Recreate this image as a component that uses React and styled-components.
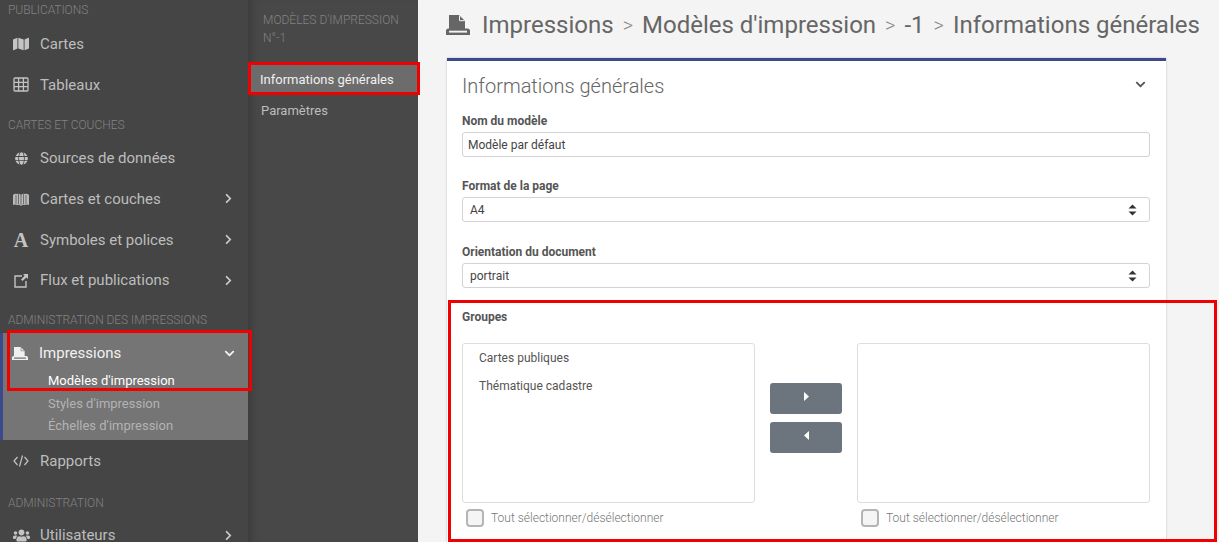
import React from 'react';
import styled, { createGlobalStyle } from 'styled-components';
import { FaMap, FaGlobe, FaUsers, FaChevronRight, FaChevronDown } from 'react-icons/fa';

const GlobalStyle = createGlobalStyle`
    html, body {
        margin: 0;
        height: 100%;
        overflow: hidden;
        background: #f4f4f4;
        font-family: Roboto, "Liberation Sans", sans-serif;
    }
`;

const Page = styled.div`
    display: flex;
    width: 1219px;
    height: 542px;
    overflow: hidden;
`;

const Sidebar = styled.nav`
    flex: none;
    width: 248px;
    height: 542px;
    background: #454545;
    position: relative;
    z-index: 2;
`;

const SectionLabel = styled.div`
    height: 14px;
    line-height: 14px;
    padding: ${props => props.$pad || '0'};
    padding-left: 8px;
    font-size: 12px;
    font-weight: 300;
    letter-spacing: -0.05px;
    color: #828282;
    white-space: nowrap;
`;

const MenuItem = styled.div`
    display: flex;
    align-items: center;
    height: 40.7px;
    padding-left: 12px;
    padding-right: 14px;
    font-size: 15px;
    color: #bdbdbd;
`;

const IconSlot = styled.span`
    display: flex;
    justify-content: center;
    align-items: center;
    width: 18px;
    margin-right: 10px;
    color: #c4c4c4;
    font-size: ${props => props.$size || 16}px;
`;

const SerifA = styled.span`
    font-family: "Liberation Serif", serif;
    font-weight: 700;
    font-size: 20px;
    line-height: 1;
`;

const ItemLabel = styled.span`
    flex: 1;
    color: ${props => (props.$active ? '#f2f2f2' : '#bdbdbd')};
`;

const Caret = styled.span`
    display: flex;
    font-size: 11px;
    color: ${props => (props.$active ? '#f2f2f2' : '#c9c9c9')};
`;

const ActiveGroup = styled.div`
    position: relative;
    margin-top: 6px;
    background: #757575;
    border-left: 3px solid #3b4a8c;
    height: 107px;
`;

const ActiveHead = styled.div`
    display: flex;
    align-items: center;
    box-sizing: border-box;
    height: 37px;
    padding-top: 3px;
    padding-left: 8px;
    padding-right: 13px;
    font-size: 15px;
`;

const SubItem = styled.div`
    height: 22.5px;
    line-height: 22.5px;
    padding-left: 45px;
    font-size: 13px;
    color: ${props => (props.$active ? '#ffffff' : '#b3b3b3')};
`;

const RedFrame = styled.div`
    position: absolute;
    border: 3px solid #f00000;
    pointer-events: none;
    box-sizing: border-box;
`;

const SecondNav = styled.nav`
    flex: none;
    width: 170px;
    height: 542px;
    background: #484848;
    box-shadow: inset 8px 0 8px -6px rgba(0, 0, 0, 0.22);
    box-sizing: border-box;
    padding-top: 11px;
`;

const SecondTitle = styled.div`
    padding-left: 15px;
    font-size: 12px;
    font-weight: 300;
    line-height: 18px;
    color: #828282;
    height: 53px;
`;

const SecondItem = styled.div`
    position: relative;
    height: 31px;
    line-height: 31px;
    padding-left: ${props => (props.$active ? '12px' : '13px')};
    font-size: 13px;
    background: ${props => (props.$active ? '#6c6c6c' : 'transparent')};
    color: ${props => (props.$active ? '#f0f0f0' : '#bdbdbd')};
`;

const Main = styled.main`
    flex: 1;
    min-width: 0;
    padding: 0 0 0 29px;
    overflow: hidden;
`;

const Breadcrumb = styled.div`
    display: flex;
    align-items: center;
    height: 58px;
    padding-bottom: 8px;
    box-sizing: border-box;
    color: #666666;
    font-size: 24px;
    white-space: nowrap;
`;

const Sep = styled.span`
    margin: 0 9px;
    font-size: 20px;
    font-weight: 300;
    color: #888888;
`;

const PrintWrap = styled.span`
    display: flex;
    width: 24px;
    margin-left: -1px;
    margin-right: 12px;
`;

const Card = styled.section`
    position: relative;
    box-sizing: border-box;
    width: 719px;
    height: 520px;
    padding: 13px 16px 0 15px;
    background: #ffffff;
    border-top: 3px solid #3b4a8c;
    box-shadow: 0 0 2px rgba(0, 0, 0, 0.22);
`;

const CardHeader = styled.div`
    display: flex;
    align-items: center;
    justify-content: space-between;
    height: 24px;
    margin-bottom: 16px;
    font-size: 20px;
    font-weight: 300;
    color: #666666;
`;

const Collapse = styled.span`
    display: flex;
    margin-right: 4px;
    margin-top: -4px;
    font-size: 11px;
    color: #555555;
`;

const Field = styled.div`
    margin-bottom: ${props => props.$gap || 22}px;
`;

const Label = styled.div`
    height: 14px;
    line-height: 14px;
    margin-bottom: 4px;
    font-size: 12px;
    font-weight: 700;
    color: #555555;
`;

const Input = styled.div`
    display: flex;
    align-items: center;
    justify-content: space-between;
    box-sizing: border-box;
    height: 25px;
    padding: ${props => (props.$select ? '0 12px 0 7px' : '0 5px')};
    border: 1px solid #d2d2d8;
    border-radius: 3px;
    font-size: 12px;
    color: #444444;
`;

const GroupSection = styled.div`
    position: relative;
    margin-top: 22px;
`;

const DualList = styled.div`
    display: grid;
    grid-template-columns: 293px 102px 293px;
    margin-top: 19px;
`;

const ListPane = styled.div`
    display: flex;
    flex-direction: column;
`;

const ListBox = styled.div`
    box-sizing: border-box;
    height: 160px;
    padding: 0 16px;
    border: 1px solid #dddddd;
    border-radius: 3px;
    font-size: 12px;
    color: #555555;
`;

const ListOption = styled.div`
    height: 28px;
    line-height: 28px;
`;

const Arrows = styled.div`
    display: flex;
    flex-direction: column;
    align-items: center;
    gap: 8px;
    padding-top: 40px;
`;

const ArrowButton = styled.div`
    display: flex;
    justify-content: center;
    padding-top: 9px;
    box-sizing: border-box;
    width: 72px;
    height: 31px;
    background: #6c757d;
    border-radius: 3px;
`;

const SelectAll = styled.div`
    display: flex;
    align-items: center;
    gap: 7px;
    margin-top: 6px;
    padding-left: 4px;
    font-size: 12px;
    font-weight: 300;
    color: #777777;
`;

const Check = styled.span`
    box-sizing: border-box;
    width: 18px;
    height: 18px;
    background: #f5f5f5;
    border: 2px solid #b5b5b5;
    border-radius: 4px;
`;

const PrintIcon = ({width = 24, color = '#d8d8d8', slot = '#ffffff'}) => (
    <svg width={width} height={width * 20 / 24} viewBox="0 0 24 20">
        <path d="M3 0h10l6 6v8H3z" fill={color} />
        <path d="M13.5 0.5v5.2h5.2" stroke={slot} strokeWidth="1" fill="none" />
        <path d="M2.5 13.5h19a2.5 2.5 0 0 1 2.5 2.5v4H0v-4a2.5 2.5 0 0 1 2.5-2.5z" fill={color} />
        <rect x="3" y="15.7" width="18" height="1.9" fill={slot} />
    </svg>
);

const GridIcon = () => (
    <svg width="16" height="15" viewBox="0 0 16 15" fill="none" stroke="#c4c4c4" strokeWidth="1.3">
        <rect x="1" y="1" width="14" height="13" rx="1" />
        <path d="M1 5.3h14M1 9.7h14M5.6 1v13M10.4 1v13" />
    </svg>
);

const AtlasIcon = () => (
    <svg width="16" height="14" viewBox="0 0 16 14" fill="#b9b9b9">
        <path d="M0 3q2-2 4-1 2-1 4 1 2-2 4-1 2-1 4 1v10q-2-1-4 0-2-1-4 1-2-2-4-1-2-1-4 0z" />
        <path d="M3 3v9M5.5 2v10M8 3v10M10.5 2v10M13 3v9" stroke="#5a5a5a" strokeWidth="0.8" fill="none" />
    </svg>
);

const LinkBoxIcon = () => (
    <svg width="15" height="15" viewBox="0 0 15 15" fill="none">
        <path d="M8 3H1v11h11V8" stroke="#c4c4c4" strokeWidth="1.4" />
        <path d="M9 1h5v5l-1.6-1.6L8.5 8 7 6.5l3.6-3.8z" fill="#c4c4c4" />
    </svg>
);

const CodeIcon = () => (
    <svg width="16" height="12" viewBox="0 0 16 12" fill="none" stroke="#c4c4c4" strokeWidth="1.2">
        <path d="M4.5 2L1 6l3.5 4M11.5 2L15 6l-3.5 4M9.5 0.5L6.5 11.5" />
    </svg>
);

const Triangle = ({left}) => (
    <svg width="5" height="9" viewBox="0 0 5 9" fill="#ffffff">
        <path d={left ? 'M5 0v9L0 4.5z' : 'M0 0v9l5-4.5z'} />
    </svg>
);

const UpDown = () => (
    <svg width="9" height="12" viewBox="0 0 9 12" fill="#333333">
        <path d="M4.5 0.5L8.5 4.5H0.5zM4.5 11.5L0.5 7.5H8.5z" />
    </svg>
);

const Item = ({icon, children, more, size}) => (
    <MenuItem>
        <IconSlot $size={size}>{icon}</IconSlot>
        <ItemLabel>{children}</ItemLabel>
        {more && <Caret><FaChevronRight /></Caret>}
    </MenuItem>
);

const Crumbs = ['Modèles d\'impression', '-1', 'Informations générales'];

export default function App() {
    return (
        <Page>
            <GlobalStyle />
            <Sidebar>
                <SectionLabel $pad="3px 0 6.5px">PUBLICATIONS</SectionLabel>
                <Item icon={<FaMap />}>Cartes</Item>
                <Item icon={<GridIcon />}>Tableaux</Item>
                <SectionLabel $pad="13.5px 0 5.5px">CARTES ET COUCHES</SectionLabel>
                <Item icon={<FaGlobe />} size={13}>Sources de données</Item>
                <Item icon={<AtlasIcon />} more>Cartes et couches</Item>
                <Item icon={<SerifA>A</SerifA>} more>Symboles et polices</Item>
                <Item icon={<LinkBoxIcon />} more>Flux et publications</Item>
                <SectionLabel $pad="12.7px 0 0">ADMINISTRATION DES IMPRESSIONS</SectionLabel>
                <ActiveGroup>
                    <ActiveHead>
                        <IconSlot><PrintIcon width={16} color="#f0f0f0" slot="#757575" /></IconSlot>
                        <ItemLabel $active>Impressions</ItemLabel>
                        <Caret $active><FaChevronDown /></Caret>
                    </ActiveHead>
                    <SubItem $active>Modèles d'impression</SubItem>
                    <SubItem>Styles d'impression</SubItem>
                    <SubItem>Échelles d'impression</SubItem>
                    <RedFrame style={{left: 4, top: -3, width: 245, height: 61}} />
                </ActiveGroup>
                <Item icon={<CodeIcon />}>Rapports</Item>
                <SectionLabel $pad="15.3px 0 4.6px">ADMINISTRATION</SectionLabel>
                <Item icon={<FaUsers />} size={17} more>Utilisateurs</Item>
            </Sidebar>
            <SecondNav>
                <SecondTitle>MODÈLES D'IMPRESSION<br />N°-1</SecondTitle>
                <SecondItem $active>
                    Informations générales
                    <RedFrame style={{left: 0, top: -2, width: 172, height: 33}} />
                </SecondItem>
                <SecondItem>Paramètres</SecondItem>
            </SecondNav>
            <Main>
                <Breadcrumb>
                    <PrintWrap><PrintIcon width={24} color="#666666" slot="#f4f4f4" /></PrintWrap>
                    Impressions
                    {Crumbs.map(crumb => (
                        <React.Fragment key={crumb}>
                            <Sep>&gt;</Sep>
                            {crumb}
                        </React.Fragment>
                    ))}
                </Breadcrumb>
                <Card>
                    <CardHeader>
                        Informations générales
                        <Collapse><FaChevronDown /></Collapse>
                    </CardHeader>
                    <Field>
                        <Label>Nom du modèle</Label>
                        <Input>Modèle par défaut</Input>
                    </Field>
                    <Field $gap={23}>
                        <Label>Format de la page</Label>
                        <Input $select>A4 <UpDown /></Input>
                    </Field>
                    <Field>
                        <Label>Orientation du document</Label>
                        <Input $select>portrait <UpDown /></Input>
                    </Field>
                    <GroupSection>
                        <Label>Groupes</Label>
                        <DualList>
                            <ListPane>
                                <ListBox>
                                    <ListOption>Cartes publiques</ListOption>
                                    <ListOption>Thématique cadastre</ListOption>
                                </ListBox>
                                <SelectAll><Check />Tout sélectionner/désélectionner</SelectAll>
                            </ListPane>
                            <Arrows>
                                <ArrowButton><Triangle /></ArrowButton>
                                <ArrowButton><Triangle left /></ArrowButton>
                            </Arrows>
                            <ListPane>
                                <ListBox />
                                <SelectAll><Check />Tout sélectionner/désélectionner</SelectAll>
                            </ListPane>
                        </DualList>
                        <RedFrame style={{left: -14, top: -10, width: 769, height: 242}} />
                    </GroupSection>
                </Card>
            </Main>
        </Page>
    );
}
